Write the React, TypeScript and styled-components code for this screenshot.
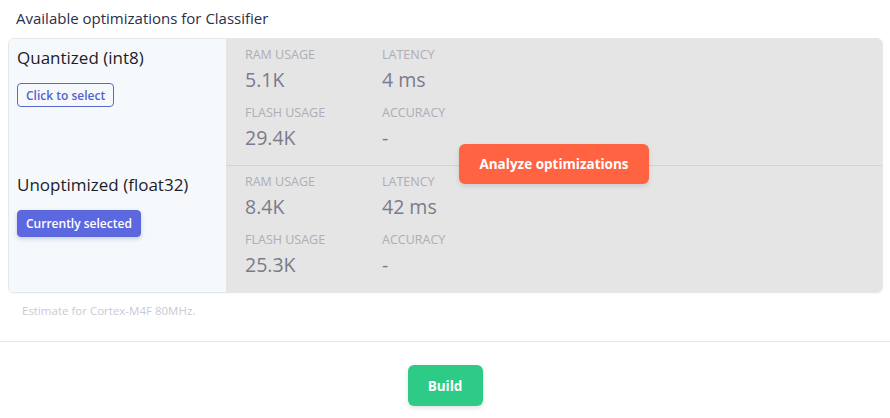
import React from "react";
import styled, { createGlobalStyle } from "styled-components";

const Global = createGlobalStyle`
  html, body { margin: 0; padding: 0; background: #ffffff; }
  body { font-family: "Open Sans", "Noto Sans", sans-serif; -webkit-font-smoothing: antialiased; }
  * { box-sizing: border-box; }
`;

const Page = styled.div`
  width: 890px;
  height: 418px;
  display: flex;
  flex-direction: column;
  overflow: hidden;
`;

const Section = styled.div`
  padding: 8px 7px 0 8px;
`;

const Heading = styled.div`
  font-size: 15px;
  line-height: 20px;
  color: #2b2e4a;
  padding-left: 8px;
  margin-bottom: 10px;
`;

const Card = styled.div`
  position: relative;
  border: 1px solid #e4e7eb;
  border-radius: 6px;
  overflow: hidden;
  background: #ffffff;
  box-shadow: 0 1px 2px rgba(0, 0, 0, 0.04);
`;

const Row = styled.div<{ $last?: boolean }>`
  display: grid;
  grid-template-columns: 217px 1fr;
  height: ${(p) => (p.$last ? 126 : 127)}px;
  border-bottom: ${(p) => (p.$last ? "none" : "1px solid #e6ebf0")};
`;

const Variant = styled.div`
  background: #f6f9fc;
  padding: 7px 8px;
  display: flex;
  flex-direction: column;
  align-items: flex-start;
`;

const VariantName = styled.div`
  font-size: 17px;
  line-height: 24px;
  color: #1c1d2b;
  margin-bottom: 13px;
`;

const SelectButton = styled.button<{ $selected?: boolean }>`
  font-family: inherit;
  font-size: 12px;
  font-weight: 600;
  height: ${(p) => (p.$selected ? 27 : 24)}px;
  padding: 0 8px;
  border-radius: 4px;
  border: 1px solid #5c67d6;
  background: ${(p) => (p.$selected ? "#5b68df" : "transparent")};
  color: ${(p) => (p.$selected ? "#ffffff" : "#5462cc")};
  box-shadow: ${(p) => (p.$selected ? "0 2px 4px rgba(60,70,160,0.25)" : "none")};
  cursor: pointer;
`;

const Metrics = styled.div`
  padding: 8px 19px;
  display: grid;
  grid-template-columns: 137px 137px;
  grid-auto-rows: 58px;
`;

const Metric = styled.div`
  display: flex;
  flex-direction: column;
`;

const MetricLabel = styled.div`
  font-size: 12.5px;
  line-height: 16px;
  text-transform: uppercase;
  color: #c2c2cb;
  margin-bottom: 4px;
`;

const MetricValue = styled.div`
  font-size: 19.5px;
  line-height: 26px;
  color: #8a8a9e;
`;

const Overlay = styled.div`
  position: absolute;
  top: 0;
  bottom: 0;
  left: 217px;
  right: 0;
  padding-bottom: 4px;
  background: rgba(0, 0, 0, 0.1);
  display: flex;
  align-items: center;
  justify-content: center;
`;

const AnalyzeButton = styled.button`
  font-family: inherit;
  width: 190px;
  height: 40px;
  border: none;
  border-radius: 6px;
  background: #ff6342;
  color: #ffffff;
  font-size: 13.5px;
  font-weight: 700;
  box-shadow: 0 2px 5px rgba(0, 0, 0, 0.12);
  cursor: pointer;
`;

const Note = styled.div`
  font-size: 11.5px;
  line-height: 16px;
  color: #c9cad3;
  padding: 10px 0 0 14px;
`;

const Divider = styled.hr`
  border: none;
  border-top: 1px solid #e6e6e6;
  margin: 22px 0 0;
`;

const Footer = styled.div`
  display: flex;
  justify-content: center;
  padding-top: 23px;
`;

const BuildButton = styled.button`
  font-family: inherit;
  width: 75px;
  height: 41px;
  border: none;
  border-radius: 6px;
  background: #2ecb86;
  color: #ffffff;
  font-size: 13.5px;
  font-weight: 700;
  box-shadow: 0 2px 5px rgba(0, 0, 0, 0.12);
  cursor: pointer;
`;

type VariantData = {
  name: string;
  selected: boolean;
  ram: string;
  latency: string;
  flash: string;
  accuracy: string;
};

const variants: VariantData[] = [
  { name: "Quantized (int8)", selected: false, ram: "5.1K", latency: "4 ms", flash: "29.4K", accuracy: "-" },
  { name: "Unoptimized (float32)", selected: true, ram: "8.4K", latency: "42 ms", flash: "25.3K", accuracy: "-" },
];

export default function App() {
  return (
    <Page>
      <Global />
      <Section>
        <Heading>Available optimizations for Classifier</Heading>
        <Card>
          {variants.map((v, i) => (
            <Row key={v.name} $last={i === variants.length - 1}>
              <Variant>
                <VariantName>{v.name}</VariantName>
                <SelectButton $selected={v.selected}>
                  {v.selected ? "Currently selected" : "Click to select"}
                </SelectButton>
              </Variant>
              <Metrics>
                <Metric>
                  <MetricLabel>RAM usage</MetricLabel>
                  <MetricValue>{v.ram}</MetricValue>
                </Metric>
                <Metric>
                  <MetricLabel>Latency</MetricLabel>
                  <MetricValue>{v.latency}</MetricValue>
                </Metric>
                <Metric>
                  <MetricLabel>Flash usage</MetricLabel>
                  <MetricValue>{v.flash}</MetricValue>
                </Metric>
                <Metric>
                  <MetricLabel>Accuracy</MetricLabel>
                  <MetricValue>{v.accuracy}</MetricValue>
                </Metric>
              </Metrics>
            </Row>
          ))}
          <Overlay>
            <AnalyzeButton>Analyze optimizations</AnalyzeButton>
          </Overlay>
        </Card>
        <Note>Estimate for Cortex-M4F 80MHz.</Note>
      </Section>
      <Divider />
      <Footer>
        <BuildButton>Build</BuildButton>
      </Footer>
    </Page>
  );
}
